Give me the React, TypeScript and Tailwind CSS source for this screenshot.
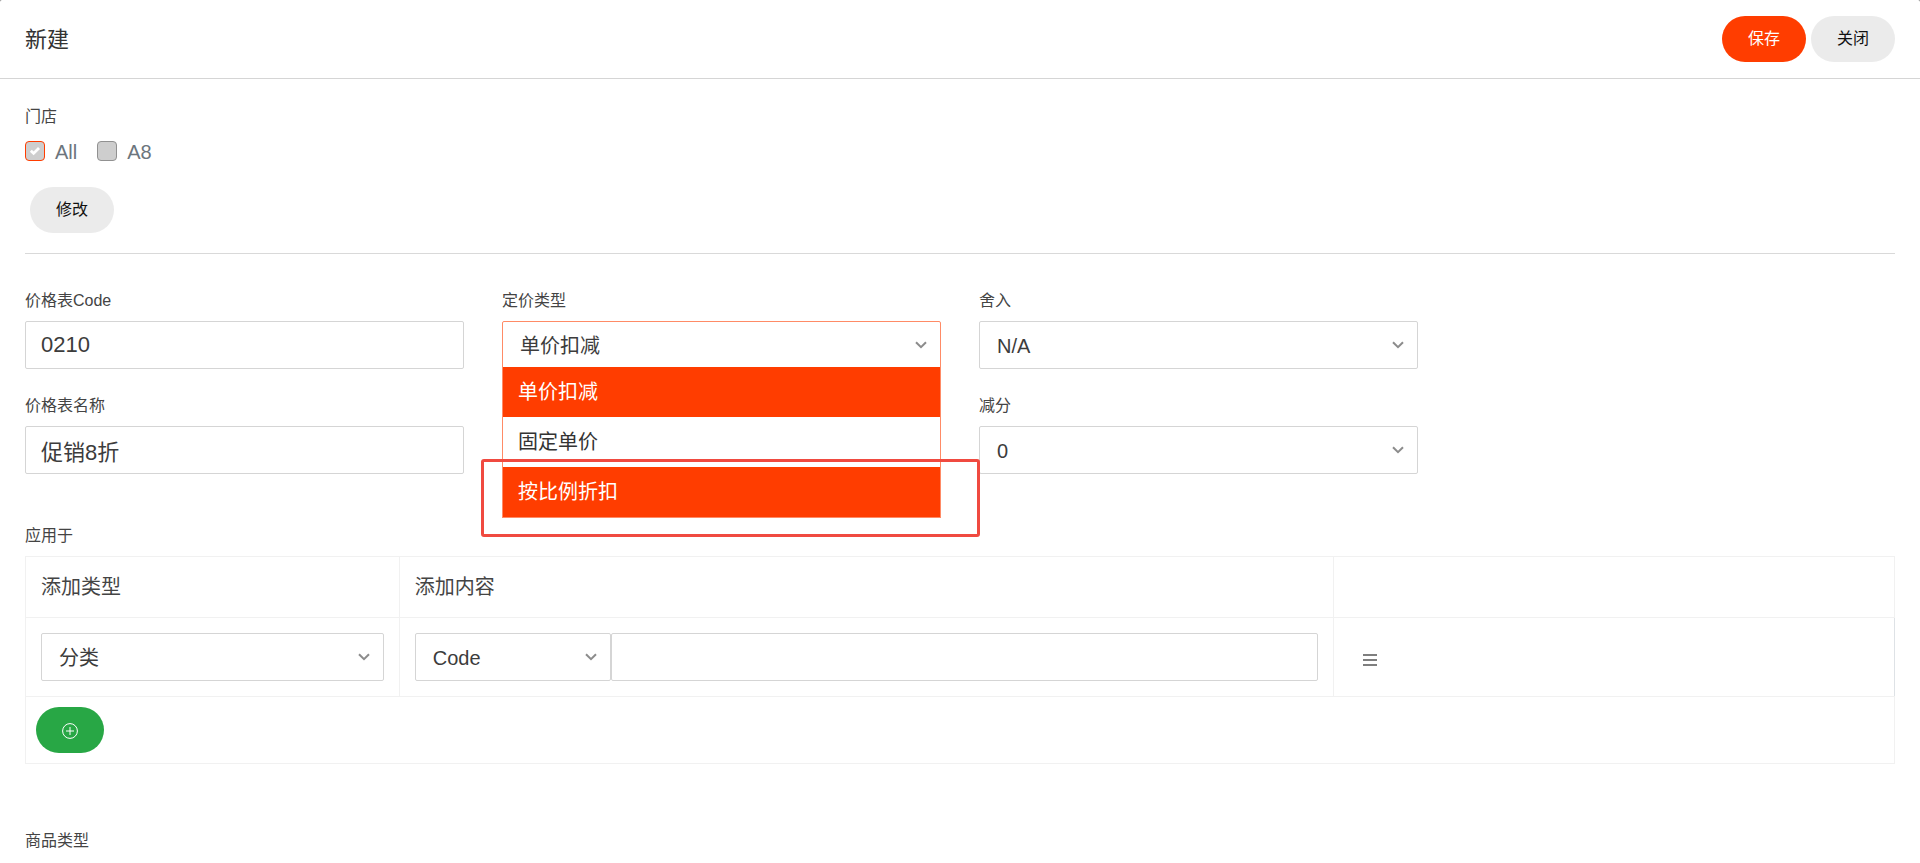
import { useState } from "react"
import type { ReactNode } from "react"
import clsx from "clsx"

const pricingTypes = ["单价扣减", "固定单价", "按比例折扣"]

function Chevron() {
  return (
    <svg
      viewBox="0 0 12 8"
      className="pointer-events-none absolute right-3.5 top-1/2 h-2 w-3 -translate-y-1/2"
      fill="none"
      stroke="#8c8c8c"
      strokeWidth="2"
      aria-hidden="true"
    >
      <path d="M1 1.2 6 6.2 11 1.2" />
    </svg>
  )
}

function PillButton({ children, className }: { children: ReactNode; className: string }) {
  return (
    <button type="button" className={clsx("h-[46px] rounded-full text-base", className)}>
      {children}
    </button>
  )
}

type SelectProps = {
  id?: string
  label?: string
  options: string[]
  active?: boolean
}

function Select({ id, label, options, active }: SelectProps) {
  return (
    <div className="relative">
      <select
        id={id}
        aria-label={label}
        className={clsx(
          "block h-12 w-full appearance-none rounded-xs border bg-white pl-[17px] pr-9 pt-0.5 text-xl text-[#3c3c3c] outline-none",
          active ? "border-[#ff8b66]" : "border-[#d5d5d5]"
        )}
      >
        {options.map((option) => (
          <option key={option}>{option}</option>
        ))}
      </select>
      <Chevron />
    </div>
  )
}

function Field({ id, label, children }: { id: string; label: string; children: ReactNode }) {
  return (
    <div className="flex flex-col gap-[9px]">
      <label htmlFor={id} className="h-6 leading-[26px]">
        {label}
      </label>
      {children}
    </div>
  )
}

function TextInput({ id, value }: { id: string; value: string }) {
  return (
    <input
      id={id}
      type="text"
      defaultValue={value}
      className="h-12 w-full rounded-xs border border-[#d5d5d5] bg-white px-[15px] text-[22px] text-[#3c3c3c] outline-none"
    />
  )
}

function StoreCheckbox({ label, checked }: { label: string; checked?: boolean }) {
  return (
    <label className="flex items-center gap-2.5 text-xl text-[#6c757d]">
      <span className="grid size-5">
        <input
          type="checkbox"
          disabled
          defaultChecked={checked}
          className="col-start-1 row-start-1 size-5 appearance-none rounded-[4px] border border-[#919191] bg-[#cecece] checked:border-[#ff3d00]"
        />
        {checked && (
          <svg
            viewBox="0 0 20 20"
            className="pointer-events-none col-start-1 row-start-1 size-5"
            fill="none"
            stroke="#fff"
            strokeWidth="2.8"
            aria-hidden="true"
          >
            <path d="M5.8 9.8 8.6 12.4 14 7" />
          </svg>
        )}
      </span>
      <span className="pt-0.5">{label}</span>
    </label>
  )
}

function PricingTypeSelect() {
  const [selected, setSelected] = useState(0)
  const highlighted = 2

  return (
    <div className="relative">
      <Select id="pricing-type" options={pricingTypes} active />
      <ul
        role="listbox"
        aria-label="定价类型"
        className="absolute inset-x-0 top-[46px] z-10 border border-t-0 border-[#ff8b66] bg-white text-xl text-[#333]"
      >
        {pricingTypes.map((type, i) => (
          <li
            key={type}
            role="option"
            aria-selected={i === selected}
            onClick={() => setSelected(i)}
            className={clsx(
              "flex h-[50px] items-center px-[15px]",
              (i === selected || i === highlighted) && "bg-[#ff3d00] text-white"
            )}
          >
            {type}
          </li>
        ))}
      </ul>
      {/* Callout around the last option */}
      <div className="pointer-events-none absolute -left-[21px] -right-[39px] top-[138px] z-20 h-[78px] rounded-[3px] border-3 border-[#f04a40]" />
    </div>
  )
}

function ApplyTable() {
  return (
    <table className="w-full table-fixed border-collapse border border-[#f1f1f1] text-left text-xl">
      <colgroup>
        <col className="w-[20%]" />
        <col className="w-[50%]" />
        <col className="w-[30%]" />
      </colgroup>
      <thead>
        <tr className="h-[61px]">
          <th className="border border-[#f1f1f1] px-[15px] font-normal">添加类型</th>
          <th className="border border-[#f1f1f1] px-[15px] font-normal">添加内容</th>
          <th className="border border-[#f1f1f1]" />
        </tr>
      </thead>
      <tbody>
        <tr className="h-[79px]">
          <td className="border border-[#f1f1f1] px-[15px]">
            <Select label="添加类型" options={["分类"]} />
          </td>
          <td className="border border-[#f1f1f1] px-[15px]">
            <div className="flex">
              <div className="w-[196px]">
                <Select label="添加内容" options={["Code"]} />
              </div>
              <input
                type="text"
                aria-label="Code"
                className="h-12 min-w-0 flex-1 rounded-xs border border-[#d5d5d5] bg-white px-[15px] outline-none"
              />
            </div>
          </td>
          <td className="border border-[#f1f1f1] border-r-[#dee2e6] px-7">
            <button type="button" aria-label="menu" className="flex items-center pt-1.5">
              <svg viewBox="0 0 16 16" className="size-4" stroke="#555" strokeWidth="1.4" aria-hidden="true">
                <path d="M1 3H15M1 8H15M1 13H15" />
              </svg>
            </button>
          </td>
        </tr>
        <tr className="h-[67px]">
          <td colSpan={3} className="border border-[#f1f1f1] px-2.5">
            <button
              type="button"
              aria-label="add"
              className="flex h-[46px] w-[68px] items-center justify-center rounded-full bg-[#28a745] pt-0.5"
            >
              <svg viewBox="0 0 16 16" className="size-4" fill="none" stroke="#fff" aria-hidden="true">
                <circle cx="8" cy="8" r="7.4" />
                <path d="M8 4V12M4 8H12" />
              </svg>
            </button>
          </td>
        </tr>
      </tbody>
    </table>
  )
}

export default function App() {
  return (
    <div className="min-h-screen bg-[#808080]">
      <div className="min-h-screen rounded-t-xs bg-white font-['Liberation_Sans','Noto_Sans_CJK_SC',sans-serif] text-base text-[#444]">
        <header className="flex items-center justify-between border-b border-[#d5d5d5] px-[25px] py-4">
          <h1 className="text-[22px] text-[#333]">新建</h1>
          <div className="flex gap-[5px]">
            <PillButton className="w-[84px] bg-[#ff3d00] text-white">保存</PillButton>
            <PillButton className="w-[84px] bg-[#ebebeb] text-[#111]">关闭</PillButton>
          </div>
        </header>

        <main className="px-[25px] pt-[25px]">
          <section className="border-b border-[#d9d9d9] pb-5">
            <h2 className="h-6 leading-[26px]">门店</h2>
            <div className="mt-2 flex h-[30px] items-center gap-5">
              <StoreCheckbox label="All" checked />
              <StoreCheckbox label="A8" />
            </div>
            <PillButton className="ml-[5px] mt-[21px] block w-[84px] bg-[#ebebeb] text-[#111]">修改</PillButton>
          </section>

          <section className="mt-[34px] grid grid-cols-4 gap-x-[38px] gap-y-6">
            <Field id="price-code" label="价格表Code">
              <TextInput id="price-code" value="0210" />
            </Field>
            <Field id="pricing-type" label="定价类型">
              <PricingTypeSelect />
            </Field>
            <Field id="rounding" label="舍入">
              <Select id="rounding" options={["N/A"]} />
            </Field>
            <div className="col-start-1">
              <Field id="price-name" label="价格表名称">
                <TextInput id="price-name" value="促销8折" />
              </Field>
            </div>
            <div className="col-start-3">
              <Field id="cents-off" label="减分">
                <Select id="cents-off" options={["0"]} />
              </Field>
            </div>
          </section>

          <section className="mt-[49px] flex flex-col gap-[9px]">
            <h2 className="h-6 leading-[26px]">应用于</h2>
            <ApplyTable />
          </section>

          <h2 className="mt-16 h-6 leading-[26px]">商品类型</h2>
        </main>
      </div>
    </div>
  )
}
